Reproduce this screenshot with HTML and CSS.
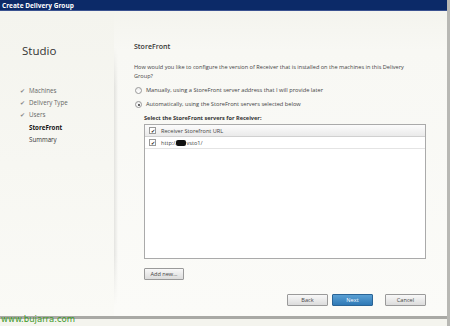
FILE: index.html
```html
<!DOCTYPE html>
<html>
<head>
<meta charset="utf-8">
<link rel="stylesheet" href="styles.css">
</head>
<body>
<div class="window">
  <div class="titlebar">Create Delivery Group</div>
  <div class="client">
    <aside class="sidebar">
      <div class="brand">Studio</div>
      <ul class="steps">
        <li class="done"><span class="tick">&#10004;</span>Machines</li>
        <li class="done"><span class="tick">&#10004;</span>Delivery Type</li>
        <li class="done"><span class="tick">&#10004;</span>Users</li>
        <li class="current"><span class="tick"></span>StoreFront</li>
        <li class="todo"><span class="tick"></span>Summary</li>
      </ul>
    </aside>
    <main class="content">
      <div class="shade"></div>
      <h1 class="heading">StoreFront</h1>
      <p class="question">How would you like to configure the version of Receiver that is installed on the machines in this Delivery Group?</p>
      <label class="radio"><span class="dot"></span>Manually, using a StoreFront server address that I will provide later</label>
      <label class="radio"><span class="dot on"></span>Automatically, using the StoreFront servers selected below</label>
      <div class="servers">
        <div class="servers-title">Select the StoreFront servers for Receiver:</div>
        <div class="list">
          <div class="row head"><span class="cb">&#10004;</span>Receiver Storefront URL</div>
          <div class="row"><span class="cb">&#10004;</span>http://<span class="redact"></span>vsto1/</div>
        </div>
        <button class="btn add">Add new...</button>
      </div>
      <div class="actions">
        <button class="btn">Back</button>
        <button class="btn primary">Next</button>
        <button class="btn cancel">Cancel</button>
      </div>
    </main>
  </div>
  <div class="watermark">www.bujarra.com</div>
</div>
</body>
</html>
```
FILE: styles.css
```css
* { box-sizing: border-box; }
html, body { margin: 0; padding: 0; }
body {
  width: 450px;
  height: 326px;
  overflow: hidden;
  background: #f4f4ee;
  font-family: "Open Sans", "Noto Sans", sans-serif;
  color: #333;
}
.window {
  position: relative;
  width: 450px;
  height: 326px;
  display: flex;
  flex-direction: column;
  background: #f4f4ee;
  border-right: 3px solid #b8b8b4;
}
.titlebar {
  height: 11px;
  background: #0c2a68;
  color: #fff;
  font-size: 6.5px;
  font-weight: 700;
  line-height: 11px;
  padding-left: 2px;
  border-bottom: 1px solid #3a5290;
}
.client {
  flex: 1;
  display: flex;
  border-bottom: 3px solid #a9a9a5;
  margin-bottom: 7px;
}
.sidebar {
  width: 114px;
  padding: 33px 0 0 22px;
  background: linear-gradient(#f4f4ee, #fafaf6);
}
.brand {
  font-size: 11.5px;
  color: #333;
  line-height: 14px;
  margin-bottom: 27px;
}
.steps {
  list-style: none;
  margin: 0;
  padding: 0;
  font-size: 6.2px;
  line-height: 12.2px;
  color: #666;
}
.steps .tick {
  display: inline-block;
  width: 9px;
  font-size: 5.5px;
  color: #888;
  margin-left: -2px;
}
.steps .current { color: #111; font-weight: 700; }
.steps .todo { color: #333; }
.content {
  flex: 1;
  padding: 12px 21px 0 20px;
  background: linear-gradient(#f4f4ee 0, #f8f8f4 40px, #fbfbf8 100%);
  display: flex;
  flex-direction: column;
  position: relative;
}
.shade {
  position: absolute;
  left: 0;
  top: 36px;
  bottom: 10px;
  width: 4px;
  background: linear-gradient(90deg, rgba(0,0,0,0.09), rgba(0,0,0,0));
  -webkit-mask-image: linear-gradient(transparent, #000 40px, #000 80%, transparent);
  mask-image: linear-gradient(transparent, #000 40px, #000 80%, transparent);
}
.heading {
  font-size: 7px;
  font-weight: 600;
  color: #333;
  margin: 19px 0 11px 0;
  line-height: 10px;
}
.question {
  font-size: 5.6px;
  line-height: 9px;
  margin: 0 0 5px 0;
  color: #444;
  padding-right: 10px;
}
.radio {
  display: flex;
  align-items: center;
  font-size: 5.7px;
  line-height: 9px;
  color: #444;
  margin-bottom: 5px;
}
.dot {
  width: 7px;
  height: 7px;
  border-radius: 50%;
  border: 1px solid #999;
  background: linear-gradient(#eee, #fff);
  margin-right: 4px;
  margin-left: 1px;
  position: relative;
}
.dot.on::after {
  content: "";
  position: absolute;
  left: 1.5px;
  top: 1.5px;
  width: 2px;
  height: 2px;
  border-radius: 50%;
  background: #333;
}
.servers { padding-left: 10px; }
.servers-title {
  font-size: 5.6px;
  font-weight: 700;
  color: #333;
  line-height: 9px;
  margin: 0 0 1px 0;
}
.list {
  height: 135px;
  background: #fff;
  border: 1px solid #aaa;
}
.row {
  height: 12px;
  display: flex;
  align-items: center;
  font-size: 5.6px;
  color: #444;
  padding-left: 4px;
  border-bottom: 1px solid #e4e4e4;
}
.row.head {
  background: linear-gradient(#fcfcfc, #eaeaea);
  border-bottom: 1px solid #d0d0d0;
}
.cb {
  width: 7px;
  height: 7px;
  border: 1px solid #999;
  background: #fff;
  font-size: 5px;
  line-height: 6px;
  text-align: center;
  color: #222;
  margin-right: 5px;
}
.redact {
  display: inline-block;
  width: 10px;
  height: 6px;
  background: #111;
  border-radius: 2px;
  margin-left: -1px;
}
.btn {
  font-family: inherit;
  font-size: 5.6px;
  color: #444;
  height: 12px;
  padding: 0;
  border: 1px solid #9a9a9a;
  border-radius: 1px;
  background: linear-gradient(#f8f8f8, #dcdcdc);
}
.btn.add {
  width: 40px;
  margin-top: 2px;
}
.actions {
  display: flex;
  justify-content: flex-end;
  gap: 4px;
  margin-top: 13px;
}
.actions .btn { width: 41px; }
.actions .btn.cancel { margin-left: 8px; }
.btn.primary {
  color: #fff;
  border-color: #2a6496;
  background: linear-gradient(#5aa0d4, #2f79b6);
}
.watermark {
  position: absolute;
  left: 1px;
  bottom: 2px;
  font-family: "DejaVu Sans", sans-serif;
  font-size: 8.5px;
  color: #3f9a2a;
}
```
